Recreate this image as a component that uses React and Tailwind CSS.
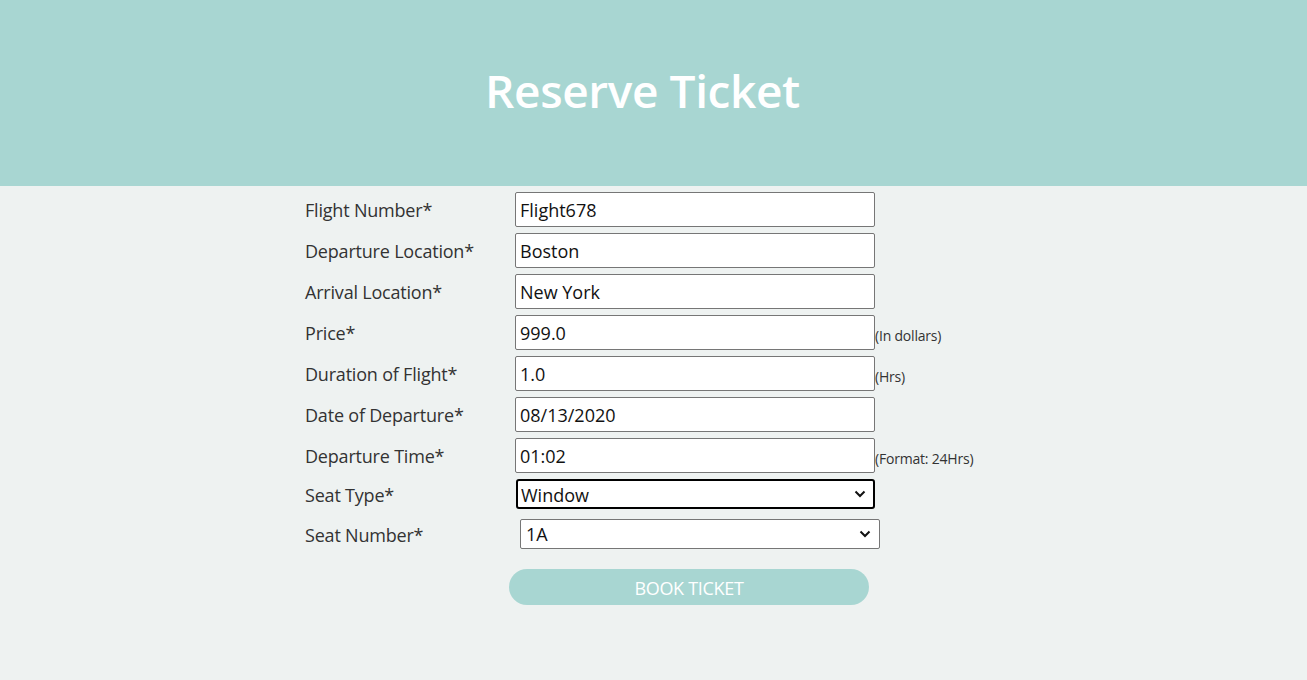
import { useState } from 'react';

const font = { fontFamily: '"Open Sans", "Noto Sans", sans-serif' };

function Chevron() {
  return (
    <svg className="pointer-events-none absolute right-[9px] top-1/2 -translate-y-1/2" width="12" height="8" viewBox="0 0 12 8">
      <path d="M1.5 1.5 L6 6 L10.5 1.5" fill="none" stroke="#111" strokeWidth="2" />
    </svg>
  );
}

export default function App() {
  const [form, setForm] = useState({
    flightNumber: 'Flight678',
    departure: 'Boston',
    arrival: 'New York',
    price: '999.0',
    duration: '1.0',
    date: '08/13/2020',
    time: '01:02',
    seatType: 'Window',
    seatNumber: '1A'
  });

  const fields = [
    { name: 'flightNumber', label: 'Flight Number*' },
    { name: 'departure', label: 'Departure Location*' },
    { name: 'arrival', label: 'Arrival Location*' },
    { name: 'price', label: 'Price*', hint: '(In dollars)' },
    { name: 'duration', label: 'Duration of Flight*', hint: '(Hrs)' },
    { name: 'date', label: 'Date of Departure*' },
    { name: 'time', label: 'Departure Time*', hint: '(Format: 24Hrs)' }
  ];

  const handleChange = (e) => {
    const { name, value } = e.target;
    setForm({ ...form, [name]: value });
  };

  return (
    <div className="min-h-[680px] bg-[#eef2f1]" style={font}>
      <div className="h-[186px] bg-[#a8d6d2] flex items-center justify-center pr-[22px] pb-[6px]">
        <h1 className="text-[46px] font-semibold text-white tracking-[-0.4px]">Reserve Ticket</h1>
      </div>

      <form className="pl-[305px] pt-[6px] flex flex-col" onSubmit={(e) => e.preventDefault()}>
        {fields.map((f) => (
          <div key={f.name} className="flex items-center h-[35px] mb-[6px]">
            <label className="w-[210px] text-[18px] text-[#333] tracking-[-0.2px] pt-[2px]">{f.label}</label>
            <input
              name={f.name}
              value={form[f.name]}
              onChange={handleChange}
              className="w-[360px] h-[35px] bg-white border border-[#767676] rounded-[2px] px-[4px] pt-[1px] text-[18px] text-[#111] outline-none"
            />
            {f.hint && <span className="self-end text-[14px] text-[#333] leading-[18px] mb-[5px] tracking-[-0.2px]">{f.hint}</span>}
          </div>
        ))}

        <div className="flex items-center h-[30px]">
          <label className="w-[211px] text-[18px] text-[#333] tracking-[-0.2px] pt-[2px]">Seat Type*</label>
          <div className="relative">
            <select
              name="seatType"
              value={form.seatType}
              onChange={handleChange}
              className="appearance-none w-[359px] h-[30px] bg-white border-2 border-black rounded-[3px] pl-[3px] pt-[1px] text-[18px] text-[#111] outline-none"
            >
              <option>Window</option>
              <option>Aisle</option>
              <option>Middle</option>
            </select>
            <Chevron />
          </div>
        </div>

        <div className="flex items-center h-[30px] mt-[10px]">
          <label className="w-[215px] text-[18px] text-[#333] tracking-[-0.2px] pt-[2px]">Seat Number*</label>
          <div className="relative">
            <select
              name="seatNumber"
              value={form.seatNumber}
              onChange={handleChange}
              className="appearance-none w-[360px] h-[30px] bg-white border border-[#767676] rounded-[2px] pl-[5px] pt-[1px] text-[18px] text-[#111] outline-none"
            >
              <option>1A</option>
              <option>1B</option>
              <option>1C</option>
            </select>
            <Chevron />
          </div>
        </div>

        <div className="pl-[204px] mt-[20px]">
          <button type="submit" className="w-[360px] h-[36px] rounded-full bg-[#a8d6d2] text-white text-[18px] tracking-[-0.3px] pt-[2px]">
            BOOK TICKET
          </button>
        </div>
      </form>
    </div>
  );
}
